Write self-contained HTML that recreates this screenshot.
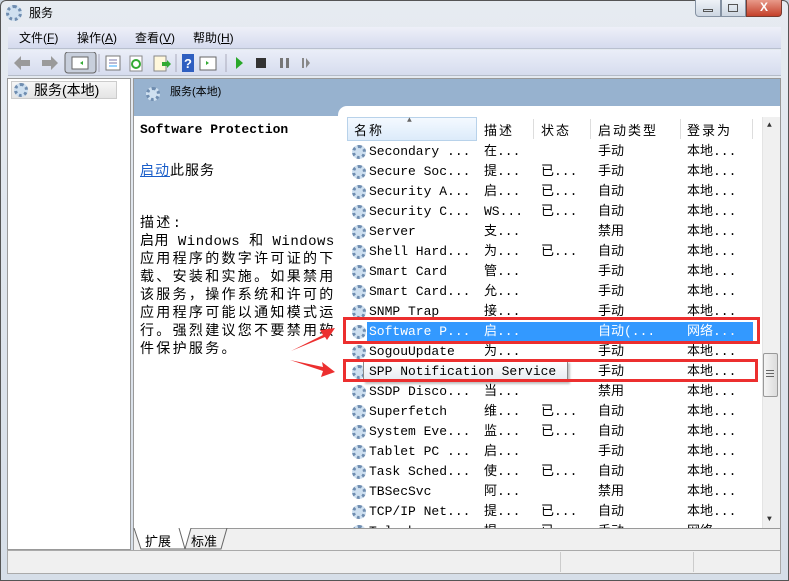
<!DOCTYPE html>
<html><head><meta charset="utf-8"><style>
*{margin:0;padding:0;box-sizing:border-box}
body{width:789px;height:581px;overflow:hidden;background:#c9d3de;font-family:"Liberation Mono","Noto Sans CJK SC",monospace;font-size:13px;color:#000;position:relative}
.a{position:absolute}
.g{display:inline-block;width:14px;height:14px;border-radius:50%;border:3px dotted #6f8db0;background:#cfe0f0;vertical-align:middle}
.row{position:absolute;left:0;height:20px;line-height:20px;white-space:nowrap;width:420px}
.row span{position:absolute;top:0}
.cj{font-family:"Liberation Sans","Noto Sans CJK SC",sans-serif}
.d div{height:18px;line-height:18px;white-space:nowrap;font-size:14px;letter-spacing:2.3px}
</style></head><body>
<div class="a" style="left:0;top:0;width:789px;height:581px;background:linear-gradient(#e6ebf1,#d6dee8);border:1px solid #555;border-radius:6px 6px 0 0"></div>
<div class="a g" style="left:6px;top:5px;width:16px;height:16px"></div>
<div class="a cj" style="left:29px;top:4px;font-size:12px">服务</div>
<div class="a" style="left:695px;top:0;width:26px;height:17px;background:linear-gradient(#eef2f7,#cdd6e2);border:1px solid #8592a3;border-top:none;border-radius:0 0 0 4px"></div>
<div class="a" style="left:703px;top:9px;width:10px;height:3px;border:1px solid #555"></div>
<div class="a" style="left:721px;top:0;width:25px;height:17px;background:linear-gradient(#eef2f7,#cdd6e2);border:1px solid #8592a3;border-top:none"></div>
<div class="a" style="left:728px;top:4px;width:10px;height:8px;border:1px solid #555"></div>
<div class="a" style="left:746px;top:0;width:36px;height:17px;background:linear-gradient(#e89a8a,#c4402a);border:1px solid #7a3b30;border-top:none;border-radius:0 0 4px 0;color:#fff;text-align:center;font:bold 12px 'Liberation Sans';line-height:15px">X</div>
<div class="a" style="left:8px;top:27px;width:773px;height:22px;background:linear-gradient(#eef0f8,#d5dbee);border-bottom:1px solid #b9c0cf"></div>
<div class="a cj" style="left:19px;top:29px;font-size:12px">文件(<u>F</u>)</div>
<div class="a cj" style="left:77px;top:29px;font-size:12px">操作(<u>A</u>)</div>
<div class="a cj" style="left:135px;top:29px;font-size:12px">查看(<u>V</u>)</div>
<div class="a cj" style="left:193px;top:29px;font-size:12px">帮助(<u>H</u>)</div>
<div class="a" style="left:8px;top:50px;width:773px;height:26px;background:linear-gradient(#eaeef8,#d6dcee);border-bottom:1px solid #b5bcc8"></div>
<svg class="a" style="left:10px;top:52px" width="300" height="22">
<path d="M4 11 L11 4 V8 H20 V14 H11 V18Z" fill="#9a9a9a"/>
<path d="M48 11 L41 4 V8 H32 V14 H41 V18Z" fill="#9a9a9a"/>
<line x1="57" y1="2" x2="57" y2="20" stroke="#aab"/>
<rect x="55" y="0" width="31" height="21" rx="3" fill="#c8cfdc" stroke="#666"/>
<rect x="62" y="5" width="16" height="12" fill="#fff" stroke="#666"/><path d="M73 9 L70 11 L73 13Z" fill="#3a3"/>
<line x1="89" y1="2" x2="89" y2="20" stroke="#aab"/>
<rect x="96" y="4" width="14" height="14" fill="#fff" stroke="#777"/><line x1="99" y1="8" x2="107" y2="8" stroke="#77a"/><line x1="99" y1="11" x2="107" y2="11" stroke="#77a"/><line x1="99" y1="14" x2="107" y2="14" stroke="#3af"/>
<rect x="120" y="4" width="12" height="15" fill="#fff" stroke="#888"/><circle cx="126" cy="12" r="4" fill="none" stroke="#3a3" stroke-width="2"/>
<rect x="144" y="4" width="12" height="15" fill="#fff8dc" stroke="#888"/><path d="M152 10 H157 V8 L161 12 L157 16 V14 H152Z" fill="#3a3"/>
<line x1="166" y1="2" x2="166" y2="20" stroke="#aab"/>
<rect x="172" y="2" width="12" height="18" fill="#2f5fc0"/><text x="174" y="16" fill="#fff" font-size="13" font-family="Liberation Sans" font-weight="bold">?</text>
<rect x="190" y="5" width="16" height="13" fill="#fff" stroke="#666"/><path d="M196 9 L199 11 L196 13Z" fill="#3a3"/>
<line x1="216" y1="2" x2="216" y2="20" stroke="#aab"/>
<path d="M226 5 L233 11 L226 17Z" fill="#2aa82a"/>
<rect x="246" y="6" width="10" height="10" fill="#333"/>
<rect x="270" y="6" width="3" height="10" fill="#777"/><rect x="276" y="6" width="3" height="10" fill="#777"/>
<rect x="292" y="6" width="2" height="10" fill="#888"/><path d="M296 6 L300 11 L296 16Z" fill="#888"/>
</svg>
<div class="a" style="left:7px;top:78px;width:124px;height:472px;background:#fff;border:1px solid #999"></div>
<div class="a" style="left:11px;top:81px;width:106px;height:18px;background:linear-gradient(#f6f6f6,#e4e4e4);border:1px solid #ccc"></div>
<div class="a g" style="left:14px;top:83px"></div>
<div class="a cj" style="left:34px;top:80px;font-size:14px">服务(本地)</div>
<div class="a" style="left:133px;top:78px;width:648px;height:472px;background:#fff;border:1px solid #999"></div>
<div class="a" style="left:134px;top:79px;width:646px;height:37px;background:#97b2cf"></div>
<div class="a" style="left:338px;top:106px;width:442px;height:20px;background:#fff;border-radius:9px 0 0 0"></div>
<div class="a g" style="left:146px;top:87px"></div>
<div class="a cj" style="left:170px;top:83px;font-size:11px">服务(本地)</div>
<div class="a" style="left:140px;top:122px;font-weight:bold;font-size:13px">Software Protection</div>
<div class="a" style="left:140px;top:160px;font-size:14px;letter-spacing:1px"><span style="color:#1a5ec9;text-decoration:underline">启动</span>此服务</div>
<div class="a d" style="left:140px;top:215px;width:200px">
<div>描述:</div>
<div style="letter-spacing:0.5px">启用 Windows 和 Windows</div>
<div>应用程序的数字许可证的下</div>
<div>载、安装和实施。如果禁用</div>
<div>该服务，操作系统和许可的</div>
<div>应用程序可能以通知模式运</div>
<div>行。强烈建议您不要禁用软</div>
<div>件保护服务。</div>
</div>
<div class="a" style="left:345px;top:117px;width:417px;height:24px;background:#fff"></div>
<div class="a" style="left:347px;top:117px;width:130px;height:24px;background:linear-gradient(#f4f9ff,#dcebfa);border:1px solid #b8d2ea"></div>
<div class="a" style="left:407px;top:116px;font-size:8px;color:#666">▲</div>
<div class="a" style="left:533px;top:119px;width:1px;height:20px;background:#ddd"></div>
<div class="a" style="left:590px;top:119px;width:1px;height:20px;background:#ddd"></div>
<div class="a" style="left:680px;top:119px;width:1px;height:20px;background:#ddd"></div>
<div class="a" style="left:752px;top:119px;width:1px;height:20px;background:#ddd"></div>
<div class="a cj" style="left:354px;top:120px;font-size:13px;letter-spacing:2px">名称</div>
<div class="a cj" style="left:484px;top:120px;font-size:13px;letter-spacing:2px">描述</div>
<div class="a cj" style="left:541px;top:120px;font-size:13px;letter-spacing:2px">状态</div>
<div class="a cj" style="left:598px;top:120px;font-size:13px;letter-spacing:2px">启动类型</div>
<div class="a cj" style="left:687px;top:120px;font-size:13px;letter-spacing:2px">登录为</div>
<div class="a" style="left:367px;top:322px;width:386px;height:19px;background:#3399ff"></div>
<div class="a" style="left:350px;top:142px;width:412px;height:386px;overflow:hidden">
<div class="row" style="top:0"><span class="g" style="left:2px;top:3px"></span><span style="left:19px">Secondary ...</span><span style="left:134px">在...</span><span style="left:248px">手动</span><span style="left:337px">本地...</span></div>
<div class="row" style="top:20px"><span class="g" style="left:2px;top:3px"></span><span style="left:19px">Secure Soc...</span><span style="left:134px">提...</span><span style="left:191px">已...</span><span style="left:248px">手动</span><span style="left:337px">本地...</span></div>
<div class="row" style="top:40px"><span class="g" style="left:2px;top:3px"></span><span style="left:19px">Security A...</span><span style="left:134px">启...</span><span style="left:191px">已...</span><span style="left:248px">自动</span><span style="left:337px">本地...</span></div>
<div class="row" style="top:60px"><span class="g" style="left:2px;top:3px"></span><span style="left:19px">Security C...</span><span style="left:134px">WS...</span><span style="left:191px">已...</span><span style="left:248px">自动</span><span style="left:337px">本地...</span></div>
<div class="row" style="top:80px"><span class="g" style="left:2px;top:3px"></span><span style="left:19px">Server</span><span style="left:134px">支...</span><span style="left:248px">禁用</span><span style="left:337px">本地...</span></div>
<div class="row" style="top:100px"><span class="g" style="left:2px;top:3px"></span><span style="left:19px">Shell Hard...</span><span style="left:134px">为...</span><span style="left:191px">已...</span><span style="left:248px">自动</span><span style="left:337px">本地...</span></div>
<div class="row" style="top:120px"><span class="g" style="left:2px;top:3px"></span><span style="left:19px">Smart Card</span><span style="left:134px">管...</span><span style="left:248px">手动</span><span style="left:337px">本地...</span></div>
<div class="row" style="top:140px"><span class="g" style="left:2px;top:3px"></span><span style="left:19px">Smart Card...</span><span style="left:134px">允...</span><span style="left:248px">手动</span><span style="left:337px">本地...</span></div>
<div class="row" style="top:160px"><span class="g" style="left:2px;top:3px"></span><span style="left:19px">SNMP Trap</span><span style="left:134px">接...</span><span style="left:248px">手动</span><span style="left:337px">本地...</span></div>
<div class="row" style="top:180px;color:#fff"><span class="g" style="left:2px;top:3px"></span><span style="left:19px">Software P...</span><span style="left:134px">启...</span><span style="left:248px">自动(...</span><span style="left:337px">网络...</span></div>
<div class="row" style="top:200px"><span class="g" style="left:2px;top:3px"></span><span style="left:19px">SogouUpdate</span><span style="left:134px">为...</span><span style="left:248px">手动</span><span style="left:337px">本地...</span></div>
<div class="row" style="top:220px"><span class="g" style="left:2px;top:3px"></span><span style="left:248px">手动</span><span style="left:337px">本地...</span></div>
<div class="row" style="top:240px"><span class="g" style="left:2px;top:3px"></span><span style="left:19px">SSDP Disco...</span><span style="left:134px">当...</span><span style="left:248px">禁用</span><span style="left:337px">本地...</span></div>
<div class="row" style="top:260px"><span class="g" style="left:2px;top:3px"></span><span style="left:19px">Superfetch</span><span style="left:134px">维...</span><span style="left:191px">已...</span><span style="left:248px">自动</span><span style="left:337px">本地...</span></div>
<div class="row" style="top:280px"><span class="g" style="left:2px;top:3px"></span><span style="left:19px">System Eve...</span><span style="left:134px">监...</span><span style="left:191px">已...</span><span style="left:248px">自动</span><span style="left:337px">本地...</span></div>
<div class="row" style="top:300px"><span class="g" style="left:2px;top:3px"></span><span style="left:19px">Tablet PC ...</span><span style="left:134px">启...</span><span style="left:248px">手动</span><span style="left:337px">本地...</span></div>
<div class="row" style="top:320px"><span class="g" style="left:2px;top:3px"></span><span style="left:19px">Task Sched...</span><span style="left:134px">使...</span><span style="left:191px">已...</span><span style="left:248px">自动</span><span style="left:337px">本地...</span></div>
<div class="row" style="top:340px"><span class="g" style="left:2px;top:3px"></span><span style="left:19px">TBSecSvc</span><span style="left:134px">阿...</span><span style="left:248px">禁用</span><span style="left:337px">本地...</span></div>
<div class="row" style="top:360px"><span class="g" style="left:2px;top:3px"></span><span style="left:19px">TCP/IP Net...</span><span style="left:134px">提...</span><span style="left:191px">已...</span><span style="left:248px">自动</span><span style="left:337px">本地...</span></div>
<div class="row" style="top:380px"><span class="g" style="left:2px;top:3px"></span><span style="left:19px">Telephony</span><span style="left:134px">提...</span><span style="left:191px">已...</span><span style="left:248px">手动</span><span style="left:337px">网络...</span></div>
</div>
<div class="a" style="left:363px;top:361px;width:205px;height:21px;background:linear-gradient(#fff,#e6eaf0);border:1px solid #8a8a8a;box-shadow:2px 2px 2px rgba(0,0,0,.25);line-height:19px;padding-left:5px;font-size:13px;white-space:nowrap">SPP Notification Service</div>
<div class="a" style="left:343px;top:317px;width:417px;height:27px;border:3px solid #ec2f2f"></div>
<div class="a" style="left:343px;top:359px;width:415px;height:23px;border:3px solid #ec2f2f"></div>
<svg class="a" style="left:285px;top:320px" width="55" height="62">
<path d="M6 31 L38 15 L35 10 L50 8 L42 20 L40 17 Z" fill="#ec2f2f"/>
<path d="M5 40 L38 47 L37 42 L50 52 L36 57 L38 51 Z" fill="#ec2f2f"/>
</svg>
<div class="a" style="left:762px;top:117px;width:18px;height:411px;background:#f0f0f0;border-left:1px solid #e4e4e4"></div>
<div class="a" style="left:767px;top:121px;font-size:8px;color:#333">▲</div>
<div class="a" style="left:767px;top:515px;font-size:8px;color:#333">▼</div>
<div class="a" style="left:763px;top:353px;width:15px;height:44px;background:linear-gradient(90deg,#f4f4f4,#dcdcdc);border:1px solid #999;border-radius:2px"></div>
<div class="a" style="left:766px;top:370px;width:8px;height:7px;border-top:1px solid #666;border-bottom:1px solid #666"></div>
<div class="a" style="left:766px;top:373px;width:8px;height:1px;background:#666"></div>
<div class="a" style="left:134px;top:528px;width:646px;height:22px;background:#f0f0f0;border-top:1px solid #999"></div>
<svg class="a" style="left:133px;top:528px" width="100" height="22">
<path d="M1 0 L8 21 H52 L58 0" fill="#fff" stroke="#666"/>
<path d="M52 21 L46 0 M52 21 H88 L94 0" fill="none" stroke="#666"/>
</svg>
<div class="a cj" style="left:145px;top:531px;font-size:13px">扩展</div>
<div class="a cj" style="left:191px;top:531px;font-size:13px">标准</div>
<div class="a" style="left:7px;top:550px;width:774px;height:24px;background:#f0f0f0;border:1px solid #aaa"></div>
<div class="a" style="left:560px;top:552px;width:1px;height:20px;background:#ccc"></div>
<div class="a" style="left:693px;top:552px;width:1px;height:20px;background:#ccc"></div>
</body></html>
